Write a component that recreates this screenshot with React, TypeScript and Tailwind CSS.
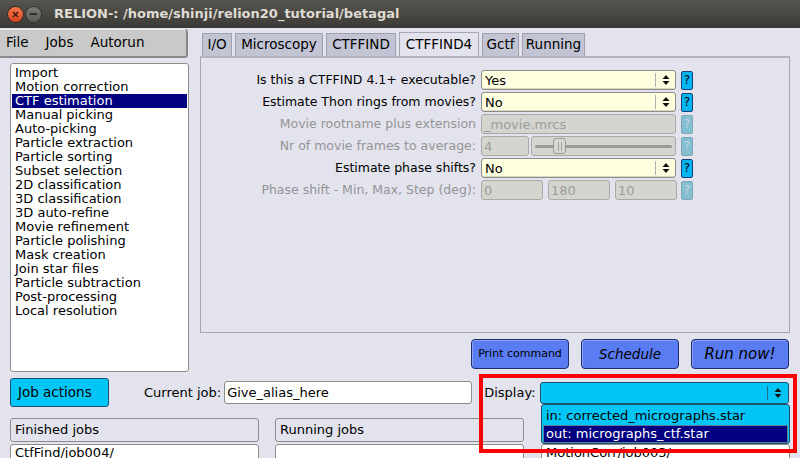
import React from "react";

const JOB_TYPES = [
  "Import",
  "Motion correction",
  "CTF estimation",
  "Manual picking",
  "Auto-picking",
  "Particle extraction",
  "Particle sorting",
  "Subset selection",
  "2D classification",
  "3D classification",
  "3D auto-refine",
  "Movie refinement",
  "Particle polishing",
  "Mask creation",
  "Join star files",
  "Particle subtraction",
  "Post-processing",
  "Local resolution",
];

const TABS = [
  { name: "I/O", w: "w-[30px]" },
  { name: "Microscopy", w: "w-[88px]" },
  { name: "CTFFIND", w: "w-[70px]" },
  { name: "CTFFIND4", w: "w-[80px]", active: true },
  { name: "Gctf", w: "w-[37px]" },
  { name: "Running", w: "w-[63px]" },
];

const Arrows = () => (
  <svg width="8" height="12" viewBox="0 0 8 12">
    <path d="M4 1 L7.5 5 L0.5 5 Z" fill="#111" />
    <path d="M4 11 L7.5 7 L0.5 7 Z" fill="#111" />
  </svg>
);

const Choice = ({ value }: { value: string }) => (
  <div className="flex h-[20px] w-[195px] items-center rounded-[3px] border border-[#8c8c8c] bg-[#ffffe0] shadow-[inset_0_-1px_0_#d8d8c0]">
    <span className="flex-1 pl-[3px] text-[13px] leading-none text-black">{value}</span>
    <div className="h-[14px] w-px bg-[#b0b0b0]" />
    <div className="flex w-[19px] justify-center">
      <Arrows />
    </div>
  </div>
);

const Help = ({ on }: { on: boolean }) => (
  <div
    className={
      on
        ? "flex h-[19px] w-[12px] items-center justify-center rounded-[2px] border border-[#1c3f78] bg-[#00b6f2] text-[12px] leading-none text-black"
        : "flex h-[19px] w-[12px] items-center justify-center rounded-[2px] border border-[#7ea6b4] bg-[#84bfd1] text-[12px] leading-none text-[#c3d6dc]"
    }
  >
    ?
  </div>
);

const Dim = ({ value, w }: { value: string; w: string }) => (
  <div
    className={`flex h-[20px] ${w} items-center rounded-[3px] border border-[#a9a9a9] bg-[#d5d5cf] pl-[2px] text-[13px] leading-none text-[#9c9c9c]`}
  >
    {value}
  </div>
);

const Row = ({
  label,
  dim,
  children,
  help,
}: {
  label: string;
  dim?: boolean;
  children: React.ReactNode;
  help: boolean;
}) => (
  <div className="mb-[2px] flex h-[20px] items-center">
    <div
      className={`w-[276px] pr-[1px] text-right text-[12.5px] leading-none ${dim ? "text-[#949494]" : "text-black"}`}
    >
      {label}
    </div>
    <div className="ml-[4px] flex w-[195px] items-center">{children}</div>
    <div className="ml-[5px]">
      <Help on={help} />
    </div>
  </div>
);

const Slider = () => (
  <div className="relative ml-[2px] flex h-[20px] w-[145px] items-center rounded-[3px] border border-[#a9a9a9] bg-[#d5d5cf]">
    <div className="mx-[3px] h-[3px] flex-1 rounded-full bg-[#9a9a9a]" />
    <div className="absolute left-[21px] top-[1px] flex h-[16px] w-[13px] items-center justify-center gap-[2px] rounded-[3px] border border-[#9a9a9a] bg-[#d8d8d2]">
      <div className="h-[9px] w-px bg-[#a0a0a0]" />
      <div className="h-[9px] w-px bg-[#a0a0a0]" />
    </div>
  </div>
);

const BlueBtn = ({ children, cls }: { children: React.ReactNode; cls: string }) => (
  <div
    className={`flex h-[30px] w-[98px] items-center justify-center rounded-[4px] border border-[#1d2f6e] bg-[#5a7cf2] text-black shadow-[inset_1px_1px_0_#8aa2f7] ${cls}`}
  >
    {children}
  </div>
);

export default function App() {
  return (
    <div className="relative h-[458px] w-[800px] overflow-hidden bg-[#e3e3ed] font-['DejaVu_Sans',sans-serif] text-black">
      {/* window title */}
      <div className="flex h-[28px] items-center bg-gradient-to-b from-[#57554f] to-[#3b3a36]">
        <div className="ml-[8px] flex h-[15px] w-[15px] items-center justify-center rounded-full bg-gradient-to-b from-[#f6764a] to-[#d9421c] shadow-[0_0_0_1px_#3a2a22]">
          <svg width="7" height="7" viewBox="0 0 7 7">
            <path d="M1 1 L6 6 M6 1 L1 6" stroke="#3a1a10" strokeWidth="1.4" />
          </svg>
        </div>
        <div className="ml-[3px] flex h-[15px] w-[15px] items-center justify-center rounded-full bg-gradient-to-b from-[#7a7974] to-[#5b5a55] shadow-[0_0_0_1px_#33322e]">
          <div className="h-[1.5px] w-[7px] bg-[#2e2d2a]" />
        </div>
        <div className="ml-[13px] text-[13px] font-bold text-[#dfdbd2]">
          RELION-: /home/shinji/relion20_tutorial/betagal
        </div>
      </div>

      <div className="flex h-[344px]">
        {/* left column */}
        <div className="flex w-[190px] flex-col">
          <div className="mt-[1px] flex h-[29px] w-[188px] items-center gap-[17px] rounded-r-[3px] border-b-2 border-r-2 border-[#8a8a8a] bg-[#c9c9c9] pl-[6px] text-[13.5px] shadow-[inset_0_1px_0_#e8e8e8]">
            <span>File</span>
            <span>Jobs</span>
            <span>Autorun</span>
          </div>
          <div className="ml-[10px] mt-[5px] h-[309px] w-[179px] rounded-[3px] border border-[#8d8d8d] bg-white px-px pt-[2px]">
            {JOB_TYPES.map((job) => (
              <div
                key={job}
                className={`h-[14px] pl-[3px] text-[13px] leading-[14px] ${
                  job === "CTF estimation" ? "bg-[#000080] text-white" : "text-black"
                }`}
              >
                {job}
              </div>
            ))}
          </div>
        </div>

        {/* right column */}
        <div className="ml-[10px] flex w-[590px] flex-col pt-[4px]">
          <div className="flex h-[24px] items-end gap-[3px] pl-[2px]">
            {TABS.map((t) => (
              <div
                key={t.name}
                className={`flex ${t.w} items-center justify-center border border-b-0 text-[13.5px] leading-none ${
                  t.active
                    ? "h-[24px] border-[#a7a7b1] bg-[#e3e3ed]"
                    : "h-[23px] border-[#a0a0ae] bg-[#c3c4d3]"
                }`}
              >
                {t.name}
              </div>
            ))}
          </div>
          <div className="h-[277px] w-[590px] border border-t-2 border-[#a7a7b1] border-t-[#b4b4bc] pt-[12px]">
            <Row label="Is this a CTFFIND 4.1+ executable?" help>
              <Choice value="Yes" />
            </Row>
            <Row label="Estimate Thon rings from movies?" help>
              <Choice value="No" />
            </Row>
            <Row label="Movie rootname plus extension" dim help={false}>
              <Dim value="_movie.mrcs" w="w-[195px]" />
            </Row>
            <Row label="Nr of movie frames to average:" dim help={false}>
              <Dim value="4" w="w-[48px]" />
              <Slider />
            </Row>
            <Row label="Estimate phase shifts?" help>
              <Choice value="No" />
            </Row>
            <Row label="Phase shift - Min, Max, Step (deg):" dim help={false}>
              <div className="flex gap-[5px]">
                <Dim value="0" w="w-[62px]" />
                <Dim value="180" w="w-[62px]" />
                <Dim value="10" w="w-[62px]" />
              </div>
            </Row>
          </div>
          <div className="mt-[6px] flex w-[590px] justify-end gap-[12px] pr-[1px]">
            <BlueBtn cls="text-[11px]">Print command</BlueBtn>
            <BlueBtn cls="text-[13.5px] italic">Schedule</BlueBtn>
            <BlueBtn cls="text-[15px] italic">Run now!</BlueBtn>
          </div>
        </div>
      </div>

      {/* job actions row */}
      <div className="mt-[6px] flex h-[29px] items-center">
        <div className="ml-[10px] flex h-[29px] w-[99px] items-center rounded-[3px] border border-[#1f4f72] bg-[#00c6f7] pl-[7px] text-[13.5px]">
          Job actions
        </div>
        <span className="ml-[35px] text-[13px]">Current job:</span>
        <div className="ml-[3px] flex h-[23px] w-[248px] items-center rounded-[3px] border border-[#8d8d8d] bg-white pl-[2px] text-[13px]">
          Give_alias_here
        </div>
        <span className="ml-[12px] text-[13px]">Display:</span>
        <div className="ml-[4px] flex h-[22px] w-[249px] items-center rounded-[3px] border border-[#21506f] bg-[#00c6f7]">
          <div className="flex-1" />
          <div className="h-[14px] w-px bg-[#2a6c8c]" />
          <div className="flex w-[20px] justify-center">
            <Arrows />
          </div>
        </div>
      </div>

      {/* job lists */}
      <div className="mt-[11px] flex">
        <div className="ml-[10px] w-[249px]">
          <div className="flex h-[24px] items-center rounded-[3px] border border-[#8d8d8d] bg-[#e3e3ed] pl-[4px] text-[13px]">
            Finished jobs
          </div>
          <div className="mt-[2px] h-[40px] rounded-[3px] border border-[#8d8d8d] bg-white pl-[4px] text-[13px] leading-[16px]">
            CtfFind/job004/
          </div>
        </div>
        <div className="ml-[16px] w-[249px]">
          <div className="flex h-[24px] items-center rounded-[3px] border border-[#8d8d8d] bg-[#e3e3ed] pl-[4px] text-[13px]">
            Running jobs
          </div>
          <div className="mt-[2px] h-[40px] rounded-[3px] border border-[#8d8d8d] bg-white" />
        </div>
        <div className="ml-[17px] w-[249px]">
          <div className="h-[24px] rounded-[3px] border border-[#8d8d8d] bg-[#e3e3ed]" />
          <div className="mt-[2px] h-[40px] rounded-[3px] border border-[#8d8d8d] bg-white pl-[4px] text-[13px] leading-[16px]">
            MotionCorr/job003/
          </div>
        </div>
      </div>

      {/* open Display menu */}
      <div className="absolute left-[541px] top-[404px] h-[40px] w-[249px] rounded-[3px] border border-[#21506f] bg-[#00c6f7] px-[1px] pt-px text-[13px]">
        <div className="flex h-[19px] items-center pl-[3px]">in: corrected_micrographs.star</div>
        <div className="flex h-[18px] items-center border border-[#5a7f9a] bg-[#000080] pl-[2px] text-white">
          out: micrographs_ctf.star
        </div>
      </div>

      {/* highlight box */}
      <div className="absolute left-[479px] top-[374px] h-[79px] w-[318px] border-4 border-[#ff0000]" />
    </div>
  );
}
